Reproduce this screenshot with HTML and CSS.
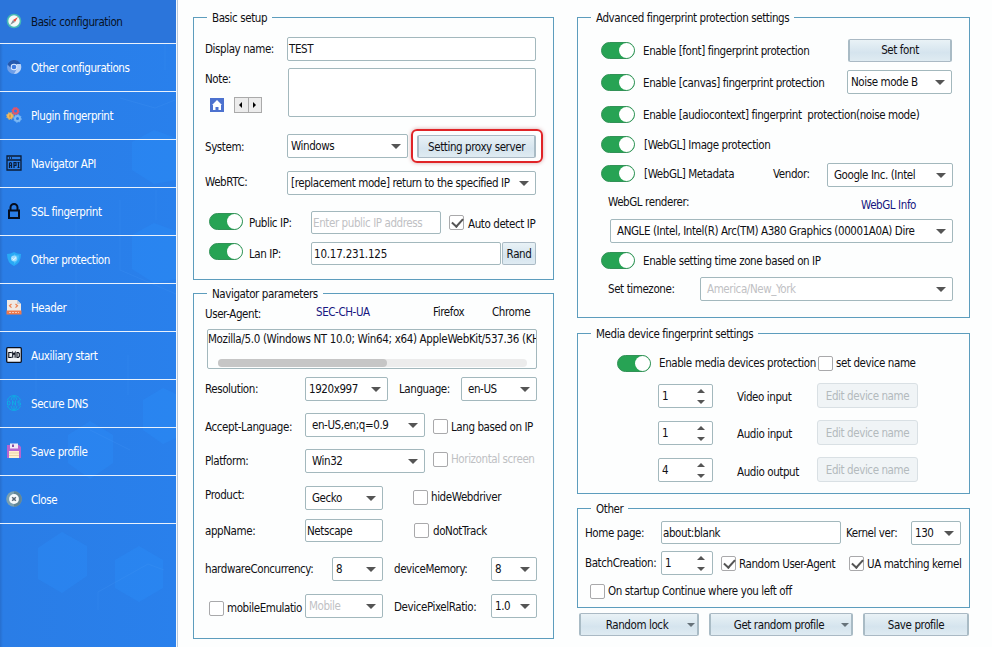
FILE: index.html
```html
<!DOCTYPE html>
<html lang="en">
<head>
<meta charset="utf-8">
<title>Basic configuration</title>
<link rel="stylesheet" href="styles.css">
</head>
<body>
<div class="app">
<nav class="sidebar">
  <svg class="backdrop" width="176" height="647" viewBox="0 0 176 647">
    <g fill="#2a8cf8" opacity=".4">
      <path d="M38 548l24-16 25 14v30l-25 17-24-14zM115 560l24-14 24 14v28l-24 14-24-14zM132 142l22-12 22 8v42l-22 4-22-14zM132 235l22-12 22 8v48l-22 4-22-14zM143 400l20-12 13 6v44l-13 6-20-14zM68 435l22-14 23 14v28l-23 16-22-16z"/>
    </g>
    <g fill="none" stroke="#4a9bf5" opacity=".2">
      <path d="M98 610v-18l50-28 16 6M120 200v70l56 24M165 70v-40M76 200v110M36 350v60M128 355v40M120 98l35 10 20-8M90 430l40 20M156 190v30"/>
    </g>
  </svg>
  <a class="item active"><svg width="16" height="16" viewBox="0 0 16 16"><circle cx="8" cy="8" r="7.3" fill="#46b9b4"/><circle cx="8" cy="8" r="5.7" fill="#f4faf7"/><path d="M12 4L9 9 7 7z" fill="#e64a3c"/><path d="M4 12l3-5 2 2z" fill="#8a8f98"/></svg><span>Basic configuration</span></a>
  <a class="item"><svg width="16" height="16" viewBox="0 0 16 16"><circle cx="8" cy="8" r="7" fill="#6f9fe8"/><path d="M1.500 5.500A7.200 7.200 0 0 1 14.600 5L8 5.500 5 9z" fill="#2459ae"/><path d="M14.600 5A7 7 0 0 1 8 15l3-5.500V5z" fill="#b8d2f8"/><circle cx="8" cy="8" r="3.300" fill="#e0edff"/><circle cx="8" cy="8" r="2.300" fill="#3f7ce0"/></svg><span>Other configurations</span></a>
  <a class="item"><svg width="16" height="16" viewBox="0 0 16 16" fill="none"><circle cx="9.500" cy="4" r="2.500" stroke="#e0566c" stroke-width="2"/><circle cx="9.500" cy="4" r="3.600" stroke="#e0566c" stroke-dasharray="1.500 1.300"/><circle cx="4" cy="9" r="3" fill="#f2b95b"/><circle cx="4" cy="9" r="3.400" stroke="#f2b95b" stroke-dasharray="1.500 1.200"/><path d="M4 7.500v3" stroke="#c47a28"/><circle cx="11.500" cy="11.500" r="2.500" stroke="#7db9f4" stroke-width="2"/><circle cx="11.500" cy="11.500" r="3.800" stroke="#7db9f4" stroke-dasharray="1.500 1.400"/></svg><span>Plugin fingerprint</span></a>
  <a class="item"><svg width="16" height="16" viewBox="0 0 16 16" fill="none" stroke="#0b1b35"><path d="M1 1h14v14H1zM1 5h14M3 3h1M5 3h1" stroke-width="1.300"/><path d="M3.500 13V8.500q0-1 1-1t1 1V13M3.500 10.500h2M8 13V7.500h2v3H8M12.500 7v6M11.500 7.500h2M11.500 12.500h2" stroke-width="1.200"/></svg><span>Navigator API</span></a>
  <a class="item"><svg width="16" height="16" viewBox="0 0 16 16" fill="none" stroke="#050d1e" stroke-width="2"><path d="M3 7.500h10V15H3zM4.500 7V4.500a3.500 3.500 0 0 1 7 0V7"/></svg><span>SSL fingerprint</span></a>
  <a class="item"><svg width="16" height="16" viewBox="0 0 16 16"><path d="M8 1q3 2 7 2 0 9-7 12Q1 12 1 3q4 0 7-2z" fill="#29a9f5"/><path d="M8 3q2 1.500 5 1.500Q13 10 8 13z" fill="#48bdfb"/><circle cx="8" cy="7.500" r="3" fill="#9edcff"/><path d="M6.500 7.500l1.200 1.200L10 6.500" fill="none" stroke="#fff"/></svg><span>Other protection</span></a>
  <a class="item"><svg width="16" height="16" viewBox="0 0 16 16"><path d="M1 1h10l4 4v10H1z" fill="#f0e9e4"/><path d="M11 1v4h4z" fill="#c7ccd6"/><path d="M.5 11.500h15v4H.5z" fill="#f07a4c"/><path d="M5.500 5l-2 1.800 2 1.800M9.500 5l2 1.800-2 1.800" fill="none" stroke="#ee8050" stroke-width="1.200"/><path d="M3 13.500h10" stroke="#f8c9b5" stroke-dasharray="2 1"/></svg><span>Header</span></a>
  <a class="item"><svg width="16" height="16" viewBox="0 0 16 16"><rect x=".7" y=".7" width="14.600" height="14.600" rx="1" fill="#f2f4f8" stroke="#0a0f1d" stroke-width="1.300"/><path d="M5.200 6.200V5.500H2.800v5h2.400v-.8M6.700 10.800V5.500l1.200 1.800 1.200-1.800v5.300M11 5.500v5h1.300l1-1v-3l-1-1z" fill="none" stroke="#0a0f1d" stroke-width="1.100"/></svg><span>Auxiliary start</span></a>
  <a class="item"><svg width="16" height="16" viewBox="0 0 16 16" fill="none" stroke="#10a9e4"><path d="M1.500 5A7 7 0 0 1 14.500 5M1.500 11A7 7 0 0 0 14.500 11M5 5q1-4 3-4t3 4M5 11q1 4 3 4t3-4M8 1v4M8 11v4"/><path d="M1.500 6v4h1.500l1-1V7L3 6zM6.500 10.500v-5l3 5v-5M14.500 6H12v2h2.500v2H12"/></svg><span>Secure DNS</span></a>
  <a class="item"><svg width="16" height="16" viewBox="0 0 16 16"><path d="M1 2h12l2 2v11H1z" fill="#b765d0"/><path d="M4 .5h8v5H4z" fill="#f3e9f4"/><path d="M6 1.500h2V4H6z" fill="#8550a5"/><path d="M3 8h10v7H3z" fill="#fff0ce"/><path d="M3 10h10M3 12.500h10" stroke="#ead5a9"/></svg><span>Save profile</span></a>
  <a class="item"><svg width="16" height="16" viewBox="0 0 16 16"><circle cx="8" cy="8" r="7.800" fill="#7ba0b0"/><path d="M8 .2a7.800 7.800 0 0 1 0 15.600z" fill="#638695"/><circle cx="8" cy="8" r="4.900" fill="#f7fafb"/><path d="M6.200 6.200l3.600 3.600M9.800 6.200L6.200 9.800" stroke="#586674" stroke-width="1.500"/></svg><span>Close</span></a>
</nav>

<main class="col left">
  <fieldset class="basic">
    <legend>Basic setup</legend>
    <div class="row r-name"><label>Display name:</label><div class="field">TEST</div></div>
    <div class="row r-note">
      <div class="note"><label>Note:</label>
        <div class="tools"><svg width="14" height="14" viewBox="0 0 14 14"><path d="M0 0h14v14H0z" fill="#4d72cf"/><path d="M7 2l5 5h-1v5H8.500V9h-3v3H3V7H2z" fill="#fff"/></svg>
        <span class="arrows"><i class="al"></i><i class="ar"></i></span></div>
      </div>
      <div class="field"></div>
    </div>
    <div class="row r-system"><label class="dn1">System:</label><div class="field select">Windows</div><div class="callout"><button>Setting proxy server</button></div></div>
    <div class="row r-webrtc"><label>WebRTC:</label><div class="field select tight">[replacement mode] return to the specified IP</div></div>
    <div class="row r-ip public"><span class="toggle"></span><label>Public IP:</label><div class="field dim">Enter public IP address</div><span class="check on"></span><label class="dn1">Auto detect IP</label></div>
    <div class="row r-ip lan"><span class="toggle"></span><label>Lan IP:</label><div class="field digits">10.17.231.125</div><button class="rand">Rand</button></div>
  </fieldset>

  <fieldset class="navigator">
    <legend>Navigator parameters</legend>
    <div class="row r-ua"><label class="dn2">User-Agent:</label><label class="link">SEC-CH-UA</label><label>Firefox</label><label>Chrome</label></div>
    <div class="uabox"><div class="ua">Mozilla/5.0 (Windows NT 10.0; Win64; x64) AppleWebKit/537.36 (KHTML, like Gecko)</div><div class="track"><div class="thumb"></div></div></div>
    <div class="row r-res"><label>Resolution:</label><div class="field select">1920x997</div><label>Language:</label><div class="field select ind">en-US</div></div>
    <div class="row r-acc"><label class="dn2">Accept-Language:</label><div class="field select ind">en-US,en;q=0.9</div><span class="check dn1"></span><label class="dn2">Lang based on IP</label></div>
    <div class="row r-acc plat"><label>Platform:</label><div class="field select ind">Win32</div><span class="check up2"></span><label class="dim up2">Horizontal screen</label></div>
    <div class="row r-prod"><label class="up3">Product:</label><div class="field select ind">Gecko</div><span class="check up1"></span><label class="up1">hideWebdriver</label></div>
    <div class="row r-app"><label>appName:</label><div class="field">Netscape</div><span class="check"></span><label>doNotTrack</label></div>
    <div class="row r-hw"><label>hardwareConcurrency:</label><div class="field select tight">8</div><label>deviceMemory:</label><div class="field select tight">8</div></div>
    <div class="row r-mob"><span class="check dn2"></span><label class="dn2">mobileEmulatio</label><div class="field select dim tight">Mobile</div><label class="dn1">DevicePixelRatio:</label><div class="field select">1.0</div></div>
  </fieldset>
</main>

<section class="col right">
  <fieldset class="advanced">
    <legend>Advanced fingerprint protection settings</legend>
    <div class="row r-font"><span class="toggle"></span><label class="dn1">Enable [font] fingerprint protection</label><button>Set font</button></div>
    <div class="row r-canvas"><span class="toggle"></span><label class="dn1">Enable [canvas] fingerprint protection</label><div class="field select tight">Noise mode B</div></div>
    <div class="row r-audio"><span class="toggle"></span><label class="dn1">Enable [audiocontext] fingerprint&nbsp; protection(noise mode)</label></div>
    <div class="row r-image"><span class="toggle"></span><label class="dn1">[WebGL] Image protection</label></div>
    <div class="row r-meta"><span class="toggle up2"></span><label class="up1">[WebGL] Metadata</label><label class="up1">Vendor:</label><div class="field select ind">Google Inc. (Intel</div></div>
    <div class="row r-info"><label>WebGL renderer:</label><label class="link dn3">WebGL Info</label></div>
    <div class="row r-angle"><div class="field select ind">ANGLE (Intel, Intel(R) Arc(TM) A380 Graphics (00001A0A) Dire</div></div>
    <div class="row r-zone"><span class="toggle"></span><label class="dn1">Enable setting time zone based on IP</label></div>
    <div class="row r-tz"><label>Set timezone:</label><div class="field select dim ind">America/New_York</div></div>
  </fieldset>

  <fieldset class="media">
    <legend>Media device fingerprint settings</legend>
    <div class="row r-media"><span class="toggle"></span><label>Enable media devices protection</label><span class="check"></span><label>set device name</label></div>
    <div class="row r-dev"><div class="field spin">1</div><label>Video input</label><button class="off">Edit device name</button></div>
    <div class="row r-dev"><div class="field spin">1</div><label>Audio input</label><button class="off">Edit device name</button></div>
    <div class="row r-dev last"><div class="field spin">4</div><label>Audio output</label><button class="off">Edit device name</button></div>
  </fieldset>

  <fieldset class="other">
    <legend>Other</legend>
    <div class="row r-home"><label>Home page:</label><div class="field">about:blank</div><label>Kernel ver:</label><div class="field select">130</div></div>
    <div class="row r-batch"><label>BatchCreation:</label><div class="field spin">1</div><span class="check on"></span><label class="dn1">Random User-Agent</label><span class="check on"></span><label class="dn1">UA matching kernel</label></div>
    <div class="row r-start"><span class="check"></span><label>On startup Continue where you left off</label></div>
  </fieldset>

  <div class="actions"><button class="menu">Random lock</button><button class="menu">Get random profile</button><button>Save profile</button></div>
</section>
</div>
</body>
</html>
```
FILE: styles.css
```css
* { box-sizing: border-box; }
body { margin: 0; background: #fdfefe; color: #101014; font: 11.5px/16px "DejaVu Sans Condensed", "DejaVu Sans", sans-serif; font-stretch: condensed; letter-spacing: -.41px; overflow: hidden; }
.app { display: flex; width: 992px; height: 647px; }

/* sidebar */
.sidebar { position: relative; width: 178px; height: 647px; flex: none; background: linear-gradient(90deg, #276fce 0, #2a7de6 3px, #2980ec 100%); border-right: 1px solid #b9c9da; box-shadow: inset -1px 0 #f4f8fc; }
.backdrop { position: absolute; left: 0; top: 0; }
.item { position: relative; display: flex; align-items: center; gap: 9px; width: 176px; height: 48px; padding-left: 6px; border-bottom: 1px solid #e9f2fd; color: #fff; }
.item svg { margin-top: -2px; }
.item span { padding-top: 1px; }
.item.active { height: 44px; color: #071226; background: #2b75db; }

/* columns and groups */
.col { display: flex; flex-direction: column; padding-top: 9px; }
.left { width: 361px; margin-left: 15px; }
.right { width: 393px; margin-left: 23px; }
fieldset { margin: 0; padding: 0 0 0 11px; border: 1px solid #5d9dbd; min-width: 0; }
legend { height: 17px; padding: 0 5px; margin-left: 2px; line-height: 18px; white-space: nowrap; }
.basic { height: 271px; }
.navigator { height: 354px; margin-top: 5px; }
.advanced { height: 309px; }
.media { height: 169px; margin-top: 7px; }
.other { height: 108px; margin-top: 6px; padding-left: 7px; }
.other legend { margin-left: 6px; }

/* form parts */
.row { display: grid; grid-template-rows: 100%; align-items: center; height: 24px; }
label { white-space: nowrap; }
.field { height: 100%; display: flex; align-items: center; min-width: 0; padding-left: 1px; border: 1px solid #a3b8bd; border-radius: 2px; background: #fff; white-space: nowrap; }
.select { position: relative; padding-left: 3px; }
.select::after { content: ""; position: absolute; right: 6px; top: 9px; border: 5px solid transparent; border-top-color: #555; border-bottom: 0; }
.field.ind { padding-left: 6px; }
.tight { padding-left: 3px; }
.digits { letter-spacing: -.2px; padding-left: 2px; }
.dim { color: #bfc1c4; }
.link { color: #161680; }
button { height: 23px; padding: 0; font: inherit; letter-spacing: inherit; color: #101014; border: 1px solid #aab9c4; border-left: 2px solid #a9bbc5; border-right: 2px solid #a9bbc5; border-radius: 2px; background: linear-gradient(#e9f2f6, #d5e4ee 60%, #dfebf2); white-space: nowrap; }
button.off { height: 25px; color: #b3babd; border: 1px solid #d9e0e4; background: #f0f4f6; border-radius: 3px; }
.toggle { position: relative; display: block; width: 34px; height: 17px; border-radius: 9px; background: #27a354; border: 1px solid #329257; }
.toggle::after { content: ""; position: absolute; right: 0; top: 0; width: 15px; height: 15px; border-radius: 50%; background: #fff; }
.check { position: relative; width: 15px; height: 15px; border: 1px solid #a9a9ab; border-radius: 2px; background: #fff; }
.check.on::after { content: ""; position: absolute; left: 4px; top: 0; width: 5px; height: 9px; border: solid #555; border-width: 0 2px 2px 0; transform: rotate(42deg); }
.spin { position: relative; padding-left: 3px; }
.spin::before, .spin::after { content: ""; position: absolute; right: 7px; border: 4px solid transparent; }
.spin::before { top: 4px; border-bottom-color: #555; border-top: 0; }
.spin::after { bottom: 3px; border-top-color: #555; border-bottom: 0; }
label.dn1 { padding-top: 2px; }
label.dn2 { padding-top: 4px; }
label.dn3 { padding-top: 6px; }
label.up1 { padding-bottom: 2px; }
label.up2 { padding-bottom: 4px; }
label.up3 { padding-bottom: 6px; }
span.dn1 { margin-top: 2px; }
span.dn2 { margin-top: 4px; }
span.up1 { margin-bottom: 2px; }
span.up2 { margin-bottom: 4px; }

/* basic setup */
.r-name { margin-top: 11px; grid-template-columns: 82px 249px; }
.r-note { margin-top: 7px; height: 49px; grid-template-columns: 83px 248px; }
.note { align-self: start; padding-top: 3px; }
.tools { display: flex; align-items: center; gap: 10px; margin: 10px 0 0 5px; height: 16px; }
.arrows { display: grid; grid-template-columns: 14px 14px; width: 28px; height: 16px; border: 1px solid #aaa; background: #ececec; }
.arrows i { position: relative; }
.al { border-right: 1px solid #aaa; }
.al::after, .ar::after { content: ""; position: absolute; left: 4px; top: 4px; border: 3px solid transparent; }
.al::after { border-right-color: #000; border-left: 0; }
.ar::after { border-left-color: #000; border-right: 0; }
.r-system { margin-top: 17px; grid-template-columns: 82px 121px 132px; }
.callout { display: flex; width: 132px; height: 34px; margin-left: 3px; padding: 4px 5px 0 4px; border: 2px solid #e02427; border-radius: 6px; box-shadow: 0 0 4px #d8a5a8; }
.callout button { width: 120px; }
.r-webrtc { margin-top: 13px; grid-template-columns: 82px 249px; }
.r-webrtc label { padding-bottom: 2px; }
.r-ip { height: 23px; padding-left: 4px; }
.public { margin-top: 16px; grid-template-columns: 40px 62px 130px 8px 19px auto; }
.public .check { grid-column: 5; }
.public .toggle { margin-bottom: 2px; }
.lan .toggle { margin-bottom: 4px; }
.lan { margin-top: 8px; grid-template-columns: 40px 62px 190px 1px 34px; }
.rand { grid-column: 5; border-width: 1px; }

/* navigator parameters */
.r-ua { height: 20px; grid-template-columns: 111px 117px 59px auto; }
.uabox { width: 330px; height: 40px; margin: 7px 0 0 2px; border: 1px solid #a3b8bd; border-radius: 2px; overflow: hidden; white-space: nowrap; }
.ua { width: 328px; overflow: hidden; line-height: 18px; letter-spacing: -.33px; }
.track { width: 309px; height: 8px; margin: 11px 0 0 10px; border-radius: 4px; background: #ececec; }
.thumb { width: 169px; height: 8px; border-radius: 4px; background: #c6c6c6; }
.r-res { margin-top: 8px; grid-template-columns: 100px 83px 11px 62px 76px; }
.r-res label:nth-child(3) { grid-column: 4; }
.r-acc { margin-top: 12px; grid-template-columns: 100px 120px 8px 18px auto; }
.r-acc .check { grid-column: 4; }
.r-prod { margin-top: 13px; grid-template-columns: 100px 78px 30px 18px auto; }
.r-prod .check { grid-column: 4; }
.r-app { margin-top: 9px; height: 23px; grid-template-columns: 100px 78px 31px 19px auto; }
.r-app .check { grid-column: 4; }
.r-hw { margin-top: 15px; grid-template-columns: 127px 51px 11px 97px 46px; }
.r-hw label:nth-child(3) { grid-column: 4; }
.r-mob { margin-top: 13px; padding-left: 4px; grid-template-columns: 18px 78px 78px 11px 97px 46px; }
.r-mob label:nth-child(4) { grid-column: 5; }

/* advanced */
.r-font { margin: 12px 0 0 12px; grid-template-columns: 42px 205px 104px; }
.r-canvas { margin: 8px 0 0 12px; grid-template-columns: 42px 204px 105px; }
.r-audio { margin: 8px 0 0 12px; grid-template-columns: 42px auto; }
.r-image { margin: 6px 0 0 12px; grid-template-columns: 43px auto; }
.r-meta { margin: 7px 0 0 12px; grid-template-columns: 43px 129px 54px 126px; }
.r-info { height: 16px; margin: 7px 0 0 19px; grid-template-columns: 253px auto; }
.r-angle { margin: 9px 0 0 21px; grid-template-columns: 343px; }
.r-zone { height: 18px; margin: 8px 0 0 12px; grid-template-columns: 42px auto; }
.r-tz { margin: 8px 0 0 19px; grid-template-columns: 92px 253px; }

/* media devices */
.r-media { height: 18px; margin: 12px 0 0 28px; grid-template-columns: 42px 159px 18px auto; }
.r-dev { height: 25px; margin: 11px 0 0 69px; grid-template-columns: 55px 24px 80px 101px; }
.r-dev + .r-dev { margin-top: 12px; }
.r-dev .field { height: 24px; }
.r-dev label { grid-column: 3; padding-top: 2px; }
.r-dev.last label { padding-top: 4px; }

/* other */
.r-home { margin-top: 4px; grid-template-columns: 76px 180px 5px 65px 50px; }
.r-home .field:nth-child(2) { height: 23px; margin-top: -1px; }
.r-home label:nth-child(3) { grid-column: 4; }
.r-batch { margin-top: 6px; grid-template-columns: 76px 52px 8px 18px 110px 18px auto; }
.r-batch .field + .check { grid-column: 4; }
.r-batch label:nth-child(4) { grid-column: 5; }
.r-batch label + .check { grid-column: 6; }
.r-start { height: 16px; margin: 8px 0 0 5px; grid-template-columns: 18px auto; }

.actions { display: grid; grid-template-columns: 120px 144px 106px; gap: 10px; margin: 5px 0 0 2px; }
.menu { position: relative; padding-right: 4px; }
.menu::after { content: ""; position: absolute; right: 2px; top: 9px; border: 4px solid transparent; border-top-color: #66727a; border-bottom: 0; }
```
